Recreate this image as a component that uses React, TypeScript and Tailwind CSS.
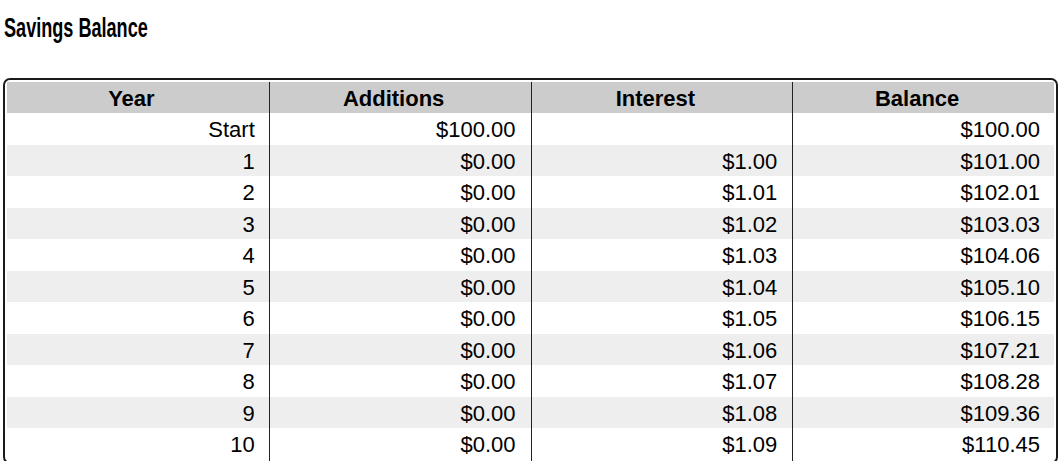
import React from "react";

const rows = [
  { year: "Start", additions: "$100.00", interest: "", balance: "$100.00" },
  { year: "1", additions: "$0.00", interest: "$1.00", balance: "$101.00" },
  { year: "2", additions: "$0.00", interest: "$1.01", balance: "$102.01" },
  { year: "3", additions: "$0.00", interest: "$1.02", balance: "$103.03" },
  { year: "4", additions: "$0.00", interest: "$1.03", balance: "$104.06" },
  { year: "5", additions: "$0.00", interest: "$1.04", balance: "$105.10" },
  { year: "6", additions: "$0.00", interest: "$1.05", balance: "$106.15" },
  { year: "7", additions: "$0.00", interest: "$1.06", balance: "$107.21" },
  { year: "8", additions: "$0.00", interest: "$1.07", balance: "$108.28" },
  { year: "9", additions: "$0.00", interest: "$1.08", balance: "$109.36" },
  { year: "10", additions: "$0.00", interest: "$1.09", balance: "$110.45" },
];

const headers = ["Year", "Additions", "Interest", "Balance"];

export default function App() {
  return (
    <div className="bg-white min-h-screen font-['Liberation_Sans',Arial,sans-serif] text-black">
      {/* Title */}
      <div className="h-[78px] px-[4px] pt-[12px]">
        <h2 className="inline-block origin-left scale-x-[0.67] font-['Liberation_Sans',Arial,sans-serif] font-bold text-[27px] leading-[32px] whitespace-nowrap">
          Savings Balance
        </h2>
      </div>

      {/* Table box */}
      <div className="mx-[3px] border-2 border-[#1a1a1a] rounded-[7px] p-[2px]">
        <div className="grid grid-cols-4 bg-[#cccccc] h-[31px] items-stretch">
          {headers.map((h, i) => (
            <div
              key={h}
              className={`flex items-center justify-center pr-[13px] text-[22px] font-bold ${
                i > 0 ? "border-l border-[#222]" : ""
              }`}
            >
              {h}
            </div>
          ))}
        </div>
        {rows.map((r, idx) => (
          <div
            key={r.year}
            className={`grid grid-cols-4 h-[31.5px] text-[22px] ${
              idx % 2 === 1 ? "bg-[#eeeeee]" : "bg-white"
            }`}
          >
            <div className="flex items-center justify-end pr-[14px]">{r.year}</div>
            <div className="flex items-center justify-end pr-[15px] border-l border-[#222]">
              {r.additions}
            </div>
            <div className="flex items-center justify-end pr-[15px] border-l border-[#222]">
              {r.interest}
            </div>
            <div className="flex items-center justify-end pr-[14px] border-l border-[#222]">
              {r.balance}
            </div>
          </div>
        ))}
      </div>
    </div>
  );
}
